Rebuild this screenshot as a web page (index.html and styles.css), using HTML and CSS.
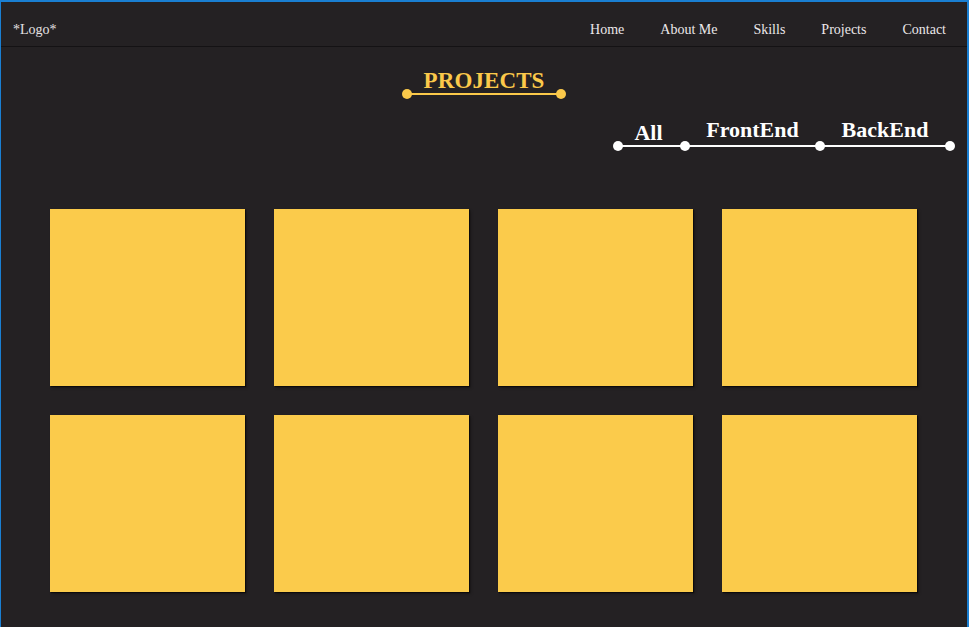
FILE: index.html
```html
<!DOCTYPE html>
<html lang="en">
<head>
<meta charset="utf-8">
<title>Projects</title>
<link rel="stylesheet" href="styles.css">
</head>
<body>
<div class="frame">
  <header class="header">
    <div class="logo">*Logo*</div>
    <nav class="nav">
      <a class="nav-link" href="#">Home</a>
      <a class="nav-link" href="#">About Me</a>
      <a class="nav-link" href="#">Skills</a>
      <a class="nav-link" href="#">Projects</a>
      <a class="nav-link" href="#">Contact</a>
    </nav>
  </header>
  <main class="main">
    <section class="title-block">
      <h1 class="title">PROJECTS</h1>
      <div class="title-line"></div>
    </section>
    <div class="filters">
      <div class="seg seg-all"><span class="seg-label seg-label-low">All</span></div>
      <div class="seg seg-front"><span class="seg-label">FrontEnd</span></div>
      <div class="seg seg-back seg-last"><span class="seg-label">BackEnd</span></div>
    </div>
    <div class="grid">
      <div class="card"></div>
      <div class="card"></div>
      <div class="card"></div>
      <div class="card"></div>
      <div class="card"></div>
      <div class="card"></div>
      <div class="card"></div>
      <div class="card"></div>
    </div>
  </main>
</div>
</body>
</html>
```
FILE: styles.css
```css
* { box-sizing: border-box; }
html, body { margin: 0; padding: 0; }
body {
  background: #242123;
  font-family: "Liberation Serif", "Times New Roman", serif;
}
.frame {
  width: 969px;
  height: 627px;
  overflow: hidden;
  border-top: 2px solid #1a7fd2;
  border-left: 1px solid #1a7fd2;
  border-right: 2px solid #1a7fd2;
  background: #242123;
}
.header {
  height: 45px;
  border-bottom: 1px solid #141214;
  display: flex;
  justify-content: space-between;
  align-items: flex-start;
  padding: 20px 21px 0 12px;
}
.logo {
  color: #e6e2e4;
  font-size: 14px;
  line-height: 16px;
}
.nav {
  display: flex;
  gap: 36px;
}
.nav-link {
  color: #ece8ea;
  text-decoration: none;
  font-size: 14px;
  line-height: 16px;
}
.main {
  padding-top: 20px;
}
.title-block {
  display: flex;
  flex-direction: column;
  align-items: center;
}
.title {
  margin: 0;
  color: #fbc94a;
  font-size: 23px;
  line-height: 27px;
  font-weight: bold;
  letter-spacing: 0.1px;
}
.title-line {
  position: relative;
  width: 154px;
  height: 2px;
  margin-top: -1px;
  background: #fbc94a;
}
.title-line::before,
.title-line::after {
  content: "";
  position: absolute;
  top: -4px;
  width: 10px;
  height: 10px;
  border-radius: 50%;
  background: #fbc94a;
}
.title-line::before { left: -5px; }
.title-line::after { right: -5px; }

.filters {
  display: flex;
  justify-content: flex-end;
  padding-right: 17px;
  margin-top: 22px;
}
.seg {
  position: relative;
  display: flex;
  justify-content: center;
  border-bottom: 2px solid #ffffff;
}
.seg::before {
  content: "";
  position: absolute;
  left: -5px;
  bottom: -6px;
  width: 10px;
  height: 10px;
  border-radius: 50%;
  background: #ffffff;
}
.seg-last::after {
  content: "";
  position: absolute;
  right: -5px;
  bottom: -6px;
  width: 10px;
  height: 10px;
  border-radius: 50%;
  background: #ffffff;
}
.seg-all { width: 67px; }
.seg-front { width: 135px; }
.seg-back { width: 130px; }
.seg-label {
  color: #ffffff;
  font-size: 22px;
  line-height: 26px;
  font-weight: bold;
  padding-bottom: 2px;
}
.seg-label-low {
  padding-top: 3px;
  padding-bottom: 0;
  margin-bottom: -2px;
  padding-right: 6px;
}
.grid {
  margin-top: 62px;
  padding-left: 49px;
  display: grid;
  grid-template-columns: repeat(4, 195px);
  grid-auto-rows: 177px;
  gap: 29px;
}
.card {
  background: #fbcb4b;
  box-shadow: 1px 1px 1px rgba(0, 0, 0, 0.55), 2px 2px 3px rgba(0, 0, 0, 0.25);
}
```
